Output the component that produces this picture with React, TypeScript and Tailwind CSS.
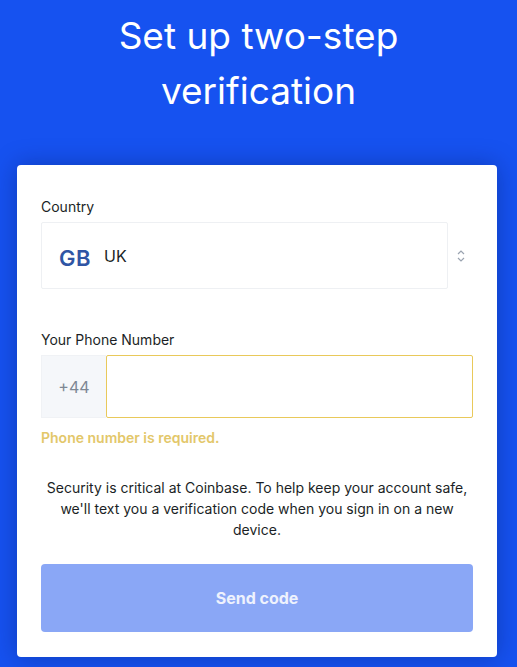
import React from "react";

export default function App() {
  return (
    <div className="min-h-screen w-full bg-[#1652f0] flex flex-col font-['Inter',sans-serif]">
      <h1 className="pt-[8px] text-center text-[37px] leading-[55px] font-normal text-white">
        Set up two-step
        <br />
        verification
      </h1>

      <div className="mt-[47px] ml-[17px] w-[480px] rounded-[4px] bg-white px-6 pt-8 pb-[25px] shadow-[0_0_24px_rgba(0,20,80,0.35)]">
        <label className="block text-[14px] leading-5 text-[#1b1f26]">Country</label>
        <div className="mt-[5px] flex items-center">
          <div className="flex h-[67px] w-[407px] items-center rounded-[2px] border border-[#eef0f3] px-[17px]">
            <span className="mt-[5px] text-[22px] font-semibold tracking-wide text-[#2f55a4]">GB</span>
            <span className="ml-[13px] text-[16px] text-[#1b1f26]">UK</span>
          </div>
          <svg
            className="ml-[8px]"
            width="10"
            height="16"
            viewBox="0 0 10 16"
            fill="none"
            stroke="#9aa3b0"
            strokeWidth="1.2"
          >
            <path d="M2 6 L5 3 L8 6" />
            <path d="M2 10 L5 13 L8 10" />
          </svg>
        </div>

        <label className="mt-[41px] block text-[14px] leading-5 text-[#1b1f26]">
          Your Phone Number
        </label>
        <div className="mt-[5px] flex h-[63px]">
          <div className="flex w-[65px] items-center justify-center border border-r-0 border-[#f0f2f5] bg-[#f5f7fa] text-[16px] text-[#7d8794]">
            +44
          </div>
          <input
            className="flex-1 rounded-[2px] border border-[#e9c95a] bg-white px-3 text-[16px] outline-none"
            type="tel"
          />
        </div>
        <p className="mt-[10px] text-[14px] leading-5 font-semibold text-[#e3c76a]">
          Phone number is required.
        </p>

        <p className="mt-[29px] px-1 text-center text-[14px] leading-[21px] text-[#1b1f26]">
          Security is critical at Coinbase. To help keep your account safe, we'll text you a
          verification code when you sign in on a new device.
        </p>

        <button className="mt-[24px] flex h-[68px] w-full items-center justify-center rounded-[4px] bg-[#8aa7f6] text-[16px] font-bold text-[#eef2fd]">
          Send code
        </button>
      </div>
    </div>
  );
}
